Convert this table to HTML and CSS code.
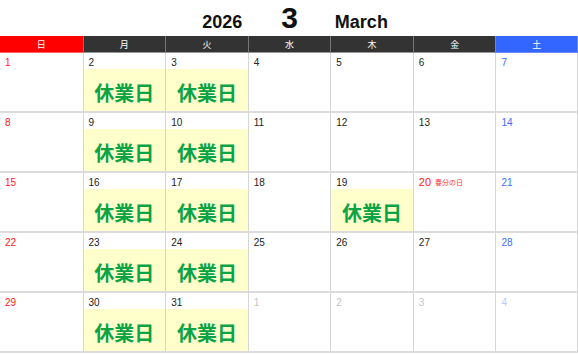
FILE: index.html
```html
<!DOCTYPE html>
<html lang="ja">
<head>
<meta charset="utf-8">
<link rel="stylesheet" href="styles.css">
</head>
<body>
<div class="cal">
  <div class="title">
    <span class="year">2026</span>
    <span class="month">3</span>
    <span class="en">March</span>
  </div>
  <div class="grid">
    <div class="hd sun">日</div>
    <div class="hd">月</div>
    <div class="hd">火</div>
    <div class="hd">水</div>
    <div class="hd">木</div>
    <div class="hd">金</div>
    <div class="hd sat">土</div>

    <div class="cell sun"><div class="d">1</div></div>
    <div class="cell"><div class="d">2</div><div class="off">休業日</div></div>
    <div class="cell"><div class="d">3</div><div class="off">休業日</div></div>
    <div class="cell"><div class="d">4</div></div>
    <div class="cell"><div class="d">5</div></div>
    <div class="cell"><div class="d">6</div></div>
    <div class="cell sat"><div class="d">7</div></div>

    <div class="cell sun"><div class="d">8</div></div>
    <div class="cell"><div class="d">9</div><div class="off">休業日</div></div>
    <div class="cell"><div class="d">10</div><div class="off">休業日</div></div>
    <div class="cell"><div class="d">11</div></div>
    <div class="cell"><div class="d">12</div></div>
    <div class="cell"><div class="d">13</div></div>
    <div class="cell sat"><div class="d">14</div></div>

    <div class="cell sun"><div class="d">15</div></div>
    <div class="cell"><div class="d">16</div><div class="off">休業日</div></div>
    <div class="cell"><div class="d">17</div><div class="off">休業日</div></div>
    <div class="cell"><div class="d">18</div></div>
    <div class="cell"><div class="d">19</div><div class="off">休業日</div></div>
    <div class="cell hol"><div class="d">20<span class="hname">春分の日</span></div></div>
    <div class="cell sat"><div class="d">21</div></div>

    <div class="cell sun"><div class="d">22</div></div>
    <div class="cell"><div class="d">23</div><div class="off">休業日</div></div>
    <div class="cell"><div class="d">24</div><div class="off">休業日</div></div>
    <div class="cell"><div class="d">25</div></div>
    <div class="cell"><div class="d">26</div></div>
    <div class="cell"><div class="d">27</div></div>
    <div class="cell sat"><div class="d">28</div></div>

    <div class="cell sun"><div class="d">29</div></div>
    <div class="cell"><div class="d">30</div><div class="off">休業日</div></div>
    <div class="cell"><div class="d">31</div><div class="off">休業日</div></div>
    <div class="cell other"><div class="d">1</div></div>
    <div class="cell other"><div class="d">2</div></div>
    <div class="cell other"><div class="d">3</div></div>
    <div class="cell other sat"><div class="d">4</div></div>
  </div>
</div>
</body>
</html>
```
FILE: styles.css
```css
html, body {
  margin: 0;
  padding: 0;
  background: #fff;
}
body {
  font-family: "Liberation Sans", Arial, "Noto Sans CJK JP", sans-serif;
  color: #222;
}
.cal {
  width: 578px;
}
.title {
  height: 36px;
  display: flex;
  align-items: baseline;
  justify-content: center;
  font-weight: bold;
  color: #111;
  padding-left: 12px;
  box-sizing: border-box;
}
.year {
  font-size: 18px;
  line-height: 35px;
}
.month {
  font-size: 30px;
  line-height: 35px;
  margin: 0 37px 0 39px;
}
.en {
  font-size: 18px;
  line-height: 35px;
}
.grid {
  display: grid;
  grid-template-columns: repeat(7, 1fr);
  grid-template-rows: 17px repeat(5, 60px);
}
.hd {
  background: #333;
  color: #fff;
  font-family: "Noto Sans CJK JP", sans-serif;
  font-size: 9px;
  display: flex;
  align-items: center;
  justify-content: center;
  border-left: 1px solid #777;
  border-bottom: 1px solid #999;
}
.hd.sun {
  background: #ff0000;
  border-left: none;
  border-bottom-color: #ff6060;
}
.hd.sat {
  background: #3366ff;
  border-left-color: #5d85ff;
  border-right: 1px solid #6a8cff;
  border-bottom-color: #6a8cff;
}
.cell {
  display: flex;
  flex-direction: column;
  border-left: 1px solid #d6d6d6;
  border-bottom: 2px solid #dcdcdc;
  min-width: 0;
}
.cell.sun {
  border-left: none;
}
.cell.sat {
  border-right: 1px solid #d6d6d6;
}
.d {
  height: 13px;
  font-size: 10px;
  line-height: 13px;
  padding-left: 5px;
  padding-top: 3px;
  color: #222;
  white-space: nowrap;
}
.sun .d { color: #ff2020; }
.sat .d { color: #3d6dff; }
.hol .d { color: #ff2020; font-size: 11px; }
.other .d { color: #c4c4c4; }
.other.sat .d { color: #b4c8ff; }
.hname {
  font-family: "Noto Sans CJK JP", sans-serif;
  font-size: 7px;
  margin-left: 4px;
  color: #ff3030;
  vertical-align: 1px;
}
.off {
  flex: 1;
  background: #ffffcc;
  display: flex;
  align-items: center;
  justify-content: center;
  color: #0aa345;
  font-family: "Noto Sans CJK JP", sans-serif;
  font-weight: bold;
  font-size: 20px;
  padding-top: 4px;
}
```
